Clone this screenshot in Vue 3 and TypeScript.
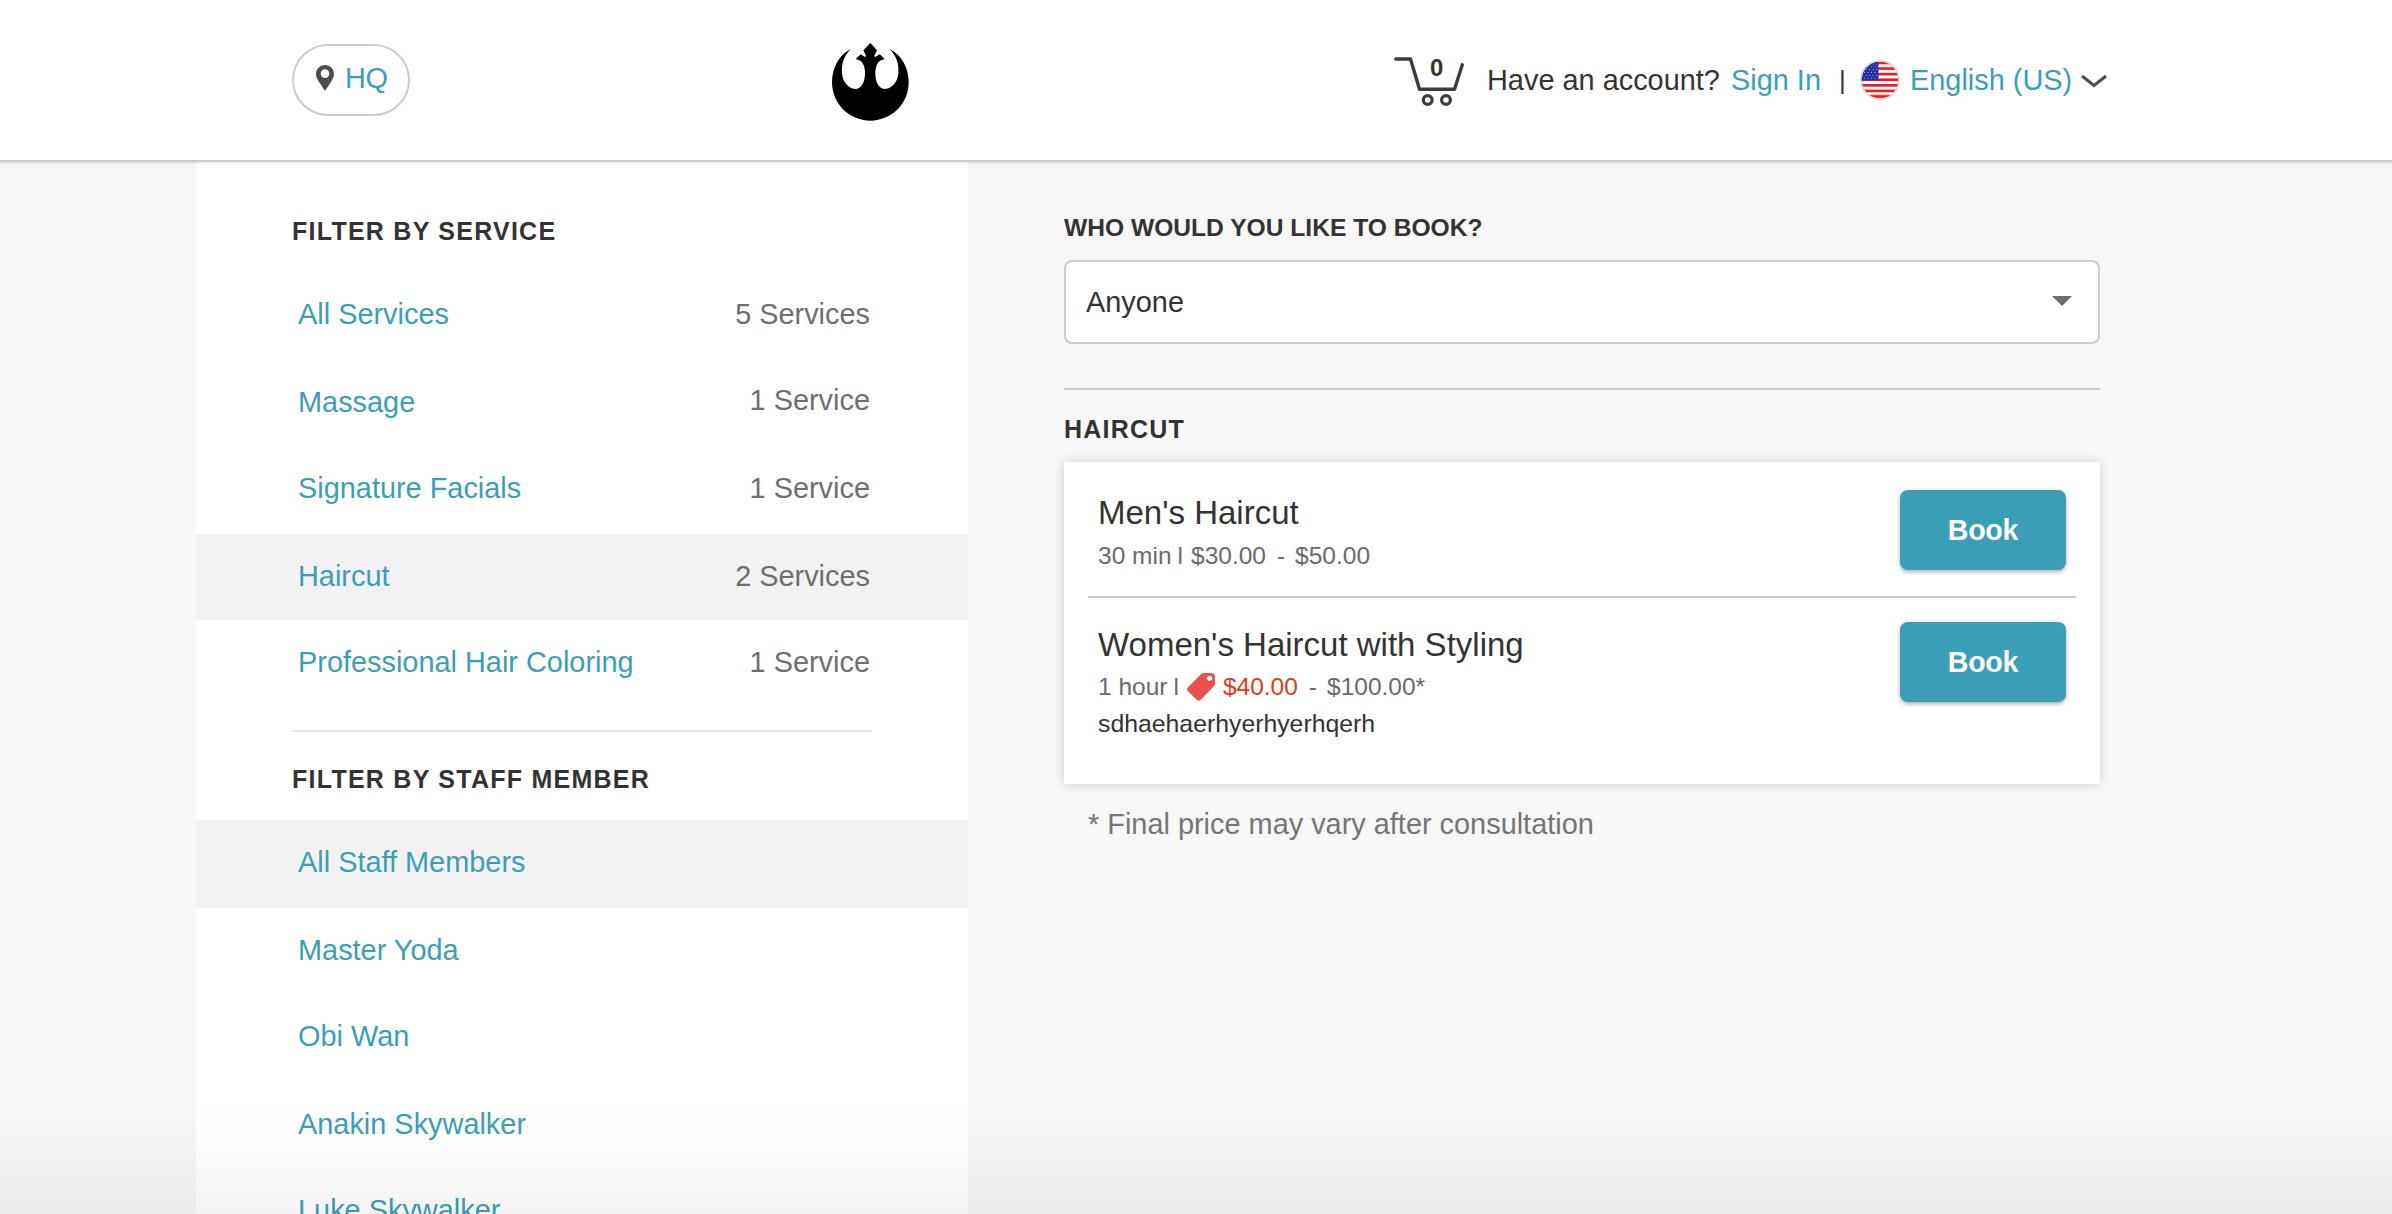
<script setup lang="ts">
interface Service {
  name: string
  count: string
}

const services: Service[] = [
  { name: 'All Services', count: '5 Services' },
  { name: 'Massage', count: '1 Service' },
  { name: 'Signature Facials', count: '1 Service' },
  { name: 'Haircut', count: '2 Services' },
  { name: 'Professional Hair Coloring', count: '1 Service' },
]
const activeService = 'Haircut'

const staff: string[] = ['All Staff Members', 'Master Yoda', 'Obi Wan', 'Anakin Skywalker', 'Luke Skywalker']
const activeStaff = 'All Staff Members'

const stripes: number[] = [0, 1, 2, 3, 4, 5, 6]
const stars: number[][] = []
for (let row = 0; row < 6; row++) {
  for (let col = 0; col < 5; col++) {
    stars.push([3 + col * 3.4 + (row % 2) * 1.7, 4 + row * 2.8])
  }
}
</script>

<template>
  <div class="page">
    <header class="header">
      <a class="location">
        <svg class="pin" viewBox="0 0 18 26">
          <path fill="#4d4d4d" fill-rule="evenodd" d="M9 0C4 0 0 4 0 9c0 2.600 1.200 4.800 2.400 7L9 26l6.600-10C16.800 13.800 18 11.600 18 9 18 4 14 0 9 0Zm0 4.300a4.300 4.300 0 1 1 0 8.600 4.300 4.300 0 0 1 0-8.600Z" />
        </svg>
        <span>HQ</span>
      </a>

      <svg class="logo" viewBox="66 39 231 234">
        <path d="M122 57C86 76 66 114 66 157C66 221 118 272 181 272C245 272 296 221 296 157C296 114 276 76 239 57C261 80 267 104 265 130C262 160 244 177 222 177C203 174 195 150 196 124C197 110 202 98 210 92L224 87L209 73L200 79Q193 82 193 77L201 61L181 39L160 61L168 77Q168 82 161 79L152 73L137 87L151 92C159 98 164 110 165 124C166 150 158 174 139 177C117 177 99 160 96 130C94 104 100 80 122 57Z" />
      </svg>

      <nav class="account">
        <span class="cart">
          <svg viewBox="0 0 72 52" fill="none" stroke="#3b3c40" stroke-linecap="round" stroke-linejoin="round">
            <path stroke-width="3.400" d="M1.800 3H16.500L25.500 33.300H60.500L68.300 8.800" />
            <circle cx="33.700" cy="44" r="4.400" stroke-width="3.200" />
            <circle cx="52" cy="44" r="4.400" stroke-width="3.200" />
          </svg>
          <b>0</b>
        </span>
        <span class="question">Have an account?</span>
        <a class="signin">Sign In</a>
        <span class="bar">|</span>
        <svg class="flag" viewBox="0 0 40 40">
          <defs>
            <clipPath id="round"><circle cx="20" cy="20" r="18.300" /></clipPath>
          </defs>
          <circle cx="20" cy="20" r="20" fill="#dcdcdc" />
          <g clip-path="url(#round)">
            <rect width="40" height="40" fill="#fff" />
            <rect y="34" width="40" height="2" fill="#f8c4a4" />
            <rect v-for="s in stripes" :key="s" x="0" :y="1.600 + s * 5.600" width="40" height="2.700" fill="#ee1c25" />
            <rect width="18.500" height="20.300" fill="#1c2fa8" />
            <circle v-for="(p, i) in stars" :key="i" :cx="p[0]" :cy="p[1]" r="0.550" fill="#b9c1ee" />
          </g>
        </svg>
        <a class="language">English (US)</a>
        <svg class="chevron" viewBox="0 0 26 14" fill="none" stroke="#4d4d4d" stroke-width="3">
          <path d="M1 2L13 11.500L25 2" />
        </svg>
      </nav>
    </header>

    <div class="body">
      <aside class="sidebar">
        <h2 class="heading">FILTER BY SERVICE</h2>
        <ul class="list">
          <li v-for="s in services" :key="s.name" :class="{ active: s.name === activeService }">
            <a>{{ s.name }}</a>
            <span class="count">{{ s.count }}</span>
          </li>
        </ul>
        <hr class="split" />
        <h2 class="heading staff-heading">FILTER BY STAFF MEMBER</h2>
        <ul class="list">
          <li v-for="name in staff" :key="name" :class="{ active: name === activeStaff }">
            <a>{{ name }}</a>
          </li>
        </ul>
      </aside>

      <main class="main">
        <h2 class="who">WHO WOULD YOU LIKE TO BOOK?</h2>
        <div class="select">
          <span>Anyone</span>
          <svg viewBox="0 0 20 10"><path fill="#6e6e6e" d="M0 0H20L10 10Z" /></svg>
        </div>
        <hr class="rule" />
        <h2 class="category">HAIRCUT</h2>
        <section class="card">
          <article class="item">
            <div class="info">
              <h3>Men's Haircut</h3>
              <p class="meta">
                <span class="duration">30 min</span><span class="tick">l</span><span>$30.00</span><span class="dash">-</span><span>$50.00</span>
              </p>
            </div>
            <button class="book">Book</button>
          </article>
          <article class="item second">
            <div class="info">
              <h3>Women's Haircut with Styling</h3>
              <p class="meta sale-meta">
                <span class="duration">1 hour</span><span class="tick">l</span>
                <svg class="tag" viewBox="0 0 28 28">
                  <path fill="#e8504b" fill-rule="evenodd" d="M14.500 .8Q15.500 0 17 0H24Q27.800 .4 28 4V10.500Q28 12 27 13L13.500 27Q11.800 28.600 10 27L.8 18Q-.6 16.300 .8 14.600ZM22.600 2.700a2.600 2.600 0 1 0 .01 0Z" />
                </svg>
                <span class="sale">$40.00</span><span class="dash">-</span><span>$100.00*</span>
              </p>
              <p class="description">sdhaehaerhyerhyerhqerh</p>
            </div>
            <button class="book">Book</button>
          </article>
        </section>
        <p class="note">* Final price may vary after consultation</p>
      </main>
    </div>
    <div class="fade"></div>
  </div>
</template>

<style>
body {
  margin: 0;
  overflow: hidden;
}
</style>

<style scoped>
.page {
  position: relative;
  width: 2392px;
  height: 1214px;
  overflow: hidden;
  display: flex;
  flex-direction: column;
  background: #f7f7f7;
  color: #333;
  font-family: "Liberation Sans", Arial, Helvetica, sans-serif;
  font-size: 28.9px;
}
h2, h3, p, ul, hr {
  margin: 0;
  padding: 0;
  border: 0;
  list-style: none;
  font-weight: normal;
}
a {
  color: #3a9fb6;
}
svg {
  display: block;
  flex: none;
}
span, a {
  white-space: nowrap;
}

.header {
  flex: none;
  display: flex;
  align-items: flex-start;
  box-sizing: border-box;
  height: 162px;
  padding-left: 292px;
  background: #fff;
  border-bottom: 2px solid #ccc;
  box-shadow: 0 1px 2px rgba(0, 0, 0, 0.12);
  z-index: 1;
}
.location {
  display: flex;
  box-sizing: border-box;
  width: 118px;
  height: 72px;
  margin-top: 44px;
  padding-left: 22px;
  border: 2px solid #ccc;
  border-radius: 36px;
  line-height: 65px;
  letter-spacing: -0.3px;
}
.pin {
  width: 18px;
  height: 26px;
  margin: 19px 11px 0 0;
}
.logo {
  width: 77px;
  height: 78px;
  margin: 43px 0 0 422px;
}
.account {
  display: flex;
  margin-left: 485px;
  line-height: 161px;
}
.cart {
  position: relative;
  width: 93px;
}
.cart svg {
  width: 72px;
  height: 52px;
  margin-top: 56px;
}
.cart b {
  position: absolute;
  left: 36px;
  top: 54px;
  font-size: 24px;
  line-height: 27px;
}
.question {
  width: 244px;
}
.signin {
  width: 106px;
}
.bar {
  width: 23px;
  padding-left: 2px;
  box-sizing: border-box;
  font-size: 26px;
}
.flag {
  width: 40px;
  height: 40px;
  margin-top: 60px;
}
.language {
  box-sizing: border-box;
  width: 181px;
  padding-left: 10px;
}
.chevron {
  width: 26px;
  height: 14px;
  margin-top: 74px;
}

.body {
  flex: 1;
  display: flex;
  min-height: 0;
}
.sidebar {
  box-sizing: border-box;
  width: 772px;
  margin-left: 196px;
  padding-top: 50px;
  background: #fff;
}
.heading {
  height: 60px;
  padding-left: 96px;
  font-size: 25px;
  font-weight: bold;
  line-height: 39px;
  letter-spacing: 1.25px;
}
.list li {
  display: flex;
  justify-content: space-between;
  height: 88px;
  padding: 0 98px 0 102px;
  line-height: 85px;
}
.list li:nth-child(even) {
  height: 86px;
}
.list li.active {
  background: #f2f2f2;
}
.count {
  color: #6e6e6e;
}
.list li:nth-child(2) .count {
  line-height: 81px;
}
.split {
  height: 2px;
  margin: 22px 96px 0;
  background: #e5e5e5;
}
.staff-heading {
  height: 60px;
  padding-top: 28px;
}

.main {
  width: 1036px;
  margin-left: 96px;
}
.who {
  height: 70px;
  padding-top: 28px;
  font-size: 24.6px;
  font-weight: bold;
  line-height: 76px;
}
.select {
  display: flex;
  justify-content: space-between;
  box-sizing: border-box;
  height: 84px;
  padding: 0 26px 0 20px;
  border: 2px solid #ccc;
  border-radius: 8px;
  background: #fff;
  line-height: 81px;
}
.select svg {
  width: 20px;
  height: 10px;
  margin-top: 34px;
}
.rule {
  height: 2px;
  margin-top: 44px;
  background: #ccc;
}
.category {
  height: 72px;
  font-size: 25px;
  font-weight: bold;
  line-height: 79px;
  letter-spacing: 1.2px;
}
.card {
  box-sizing: border-box;
  height: 322px;
  padding: 0 24px;
  background: #fff;
  box-shadow: 0 0 10px rgba(0, 0, 0, 0.17);
}
.item {
  display: flex;
  justify-content: space-between;
  align-items: flex-start;
  box-sizing: border-box;
  height: 136px;
  padding: 28px 10px 0;
  border-bottom: 2px solid #ccc;
}
.item.second {
  height: 160px;
  padding-top: 24px;
  border: 0;
}
h3 {
  font-size: 33px;
  line-height: 46px;
}
.meta {
  display: flex;
  font-size: 24.5px;
  line-height: 39px;
  color: #6a6a6a;
}
.sale-meta {
  height: 31px;
  line-height: 37px;
}
.duration {
  margin-right: 6px;
}
.tick {
  margin-right: 8px;
}
.dash {
  margin: 0 10px 0 11px;
}
.tag {
  width: 28px;
  height: 28px;
  margin: 5px 8px 0 0;
}
.sale {
  color: #e03c20;
}
.description {
  font-size: 24.8px;
  line-height: 50px;
}
.book {
  flex: none;
  width: 166px;
  height: 80px;
  padding: 0;
  border: 0;
  border-radius: 8px;
  background: #3a9fb6;
  color: #fff;
  font: bold 28.6px/81px "Liberation Sans", Arial, sans-serif;
  letter-spacing: -0.3px;
  box-shadow: 0 2px 4px rgba(0, 0, 0, 0.32);
}
.note {
  padding-left: 24px;
  line-height: 81px;
  color: #757575;
}
.fade {
  position: absolute;
  left: 0;
  right: 0;
  bottom: 0;
  height: 110px;
  background: linear-gradient(rgba(0, 0, 0, 0), rgba(0, 0, 0, 0.047));
  z-index: 2;
}
</style>
